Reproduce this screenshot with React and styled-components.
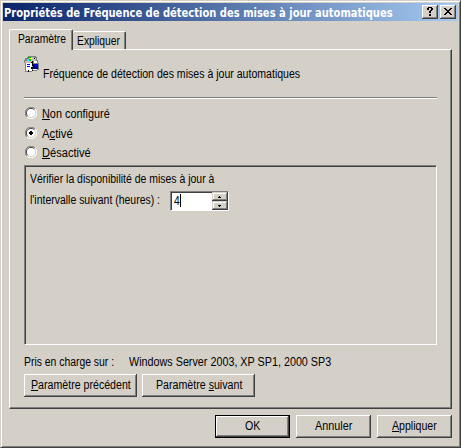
import React, { useLayoutEffect, useRef, useState } from 'react';
import styled, { createGlobalStyle } from 'styled-components';

const FACE = '#d4d0c8';
const SHADOW = '#808080';
const DARK = '#404040';

const GlobalStyle = createGlobalStyle`
  * { box-sizing: border-box; }
  body {
    margin: 0;
    background: ${FACE};
    font-family: "Liberation Sans", Arial, sans-serif;
    font-size: 12px;
    line-height: 14px;
    color: #000;
  }
`;

const Dialog = styled.div`
  width: 461px;
  height: 448px;
  display: flex;
  flex-direction: column;
  padding: 1px;
  background: ${FACE};
  border: 1px solid;
  border-color: ${FACE} ${DARK} ${DARK} ${FACE};
  box-shadow: inset 1px 1px #fff, inset -1px -1px ${SHADOW};
`;

const TitleBar = styled.header`
  height: 18px;
  margin: 1px 1px 0;
  padding: 0 2px 0 1px;
  display: flex;
  align-items: center;
  background: linear-gradient(to right, #0a246a, #a6caf0);
  color: #fff;
  font: bold 11.5px/14px "DejaVu Sans", sans-serif;
`;

const Title = styled.div`
  flex: 1;
  padding-top: 1px;
`;

const TitleButton = styled.button`
  width: 16px;
  height: 14px;
  margin-left: 2px;
  padding: 0;
  border: 0;
  display: block;
  background: ${FACE};
  box-shadow: inset -1px -1px ${DARK}, inset 1px 1px #fff, inset -2px -2px ${SHADOW};
`;

const Glyph = styled.svg`
  display: block;
  shape-rendering: crispEdges;
`;

const Tabs = styled.nav`
  display: flex;
  align-items: flex-end;
  height: 28px;
  margin: 0 7px;
`;

const Tab = styled.div`
  position: relative;
  z-index: ${props => (props.$active ? 1 : 0)};
  width: ${props => props.$width}px;
  height: ${props => (props.$active ? 21 : 18)}px;
  margin-bottom: ${props => (props.$active ? -1 : 0)}px;
  padding: ${props => (props.$active ? '2px 0 0 8px' : '2px 0 0 4px')};
  background: ${FACE};
  border-top: 1px solid #fff;
  border-left: ${props => (props.$active ? '1px solid #fff' : '0')};
  border-right: 1px solid ${DARK};
  border-radius: 2px 2px 0 0;
  box-shadow: inset -1px 0 ${SHADOW};
`;

const Panel = styled.main`
  width: 443px;
  height: 360px;
  margin-left: 7px;
  padding: 6px 13px 0 14px;
  border: 1px solid;
  border-color: #fff ${DARK} ${DARK} #fff;
  box-shadow: inset -1px -1px ${SHADOW};
`;

const PolicyRow = styled.div`
  display: flex;
  height: 41px;
  gap: 3px;
`;

const PolicyName = styled.div`
  padding-top: 11px;
`;

const Separator = styled.div`
  width: 413px;
  height: 2px;
  background: #fff;
  border-top: 1px solid ${SHADOW};
`;

const Options = styled.div`
  height: 66px;
  padding-top: 7px;
`;

const Option = styled.label`
  display: flex;
  align-items: flex-start;
  height: ${props => props.$height || 20}px;
  gap: 5px;
  padding: 1px 0 0 1px;
`;

const Settings = styled.section`
  width: 413px;
  height: 180px;
  padding: 6px 5px 0;
  border: 1px solid;
  border-color: ${SHADOW} #fff #fff ${SHADOW};
  box-shadow: inset 1px 1px ${DARK};
`;

const IntervalRow = styled.div`
  display: flex;
  height: 20px;
  margin-top: 5px;
  gap: 10px;
`;

const IntervalLabel = styled.div`
  padding-top: 2px;
`;

const Field = styled.div`
  display: flex;
  width: 59px;
  height: 20px;
  padding: 1px 0 0 1px;
  background: #fff;
  border: 1px solid;
  border-color: ${SHADOW} #fff #fff ${SHADOW};
  box-shadow: inset 1px 1px ${DARK};
`;

const Value = styled.div`
  width: 40px;
  height: 16px;
  padding: 1px 0 0 2px;
  display: flex;
`;

const Caret = styled.i`
  width: 1px;
  height: 13px;
  background: #000;
`;

const Spinner = styled.div`
  display: flex;
  flex-direction: column;
  width: 16px;
  margin-top: -1px;
`;

const SpinButton = styled.button`
  width: 16px;
  height: 9px;
  padding: 0;
  border: 0;
  display: block;
  background: ${FACE};
  box-shadow: inset -1px -1px ${DARK}, inset 1px 1px ${FACE}, inset -2px -2px ${SHADOW}, inset 2px 2px #fff;
`;

const Support = styled.div`
  display: flex;
  gap: 15px;
  height: 29px;
  padding-top: 10px;
`;

const ButtonRow = styled.div`
  display: flex;
  gap: 5px;
`;

const Footer = styled.footer`
  display: flex;
  justify-content: flex-end;
  gap: 6px;
  padding: 6px 7px 0 0;
`;

const Button = styled.button`
  width: ${props => props.$width || 75}px;
  height: 23px;
  padding: 0 0 1px;
  display: flex;
  align-items: center;
  justify-content: center;
  font: inherit;
  color: inherit;
  background: ${FACE};
  border: ${props => (props.$default ? '1px solid #000' : '0')};
  box-shadow: inset -1px -1px ${DARK}, inset 1px 1px #fff, inset -2px -2px ${SHADOW};
`;

const FitBox = styled.span`
  display: block;
  width: ${props => props.$width}px;
  height: 14px;
  white-space: nowrap;
`;

const FitInner = styled.span`
  display: inline-block;
  transform-origin: 0 0;
`;

const Key = styled.span`
  text-decoration: underline;
  text-decoration-thickness: 1px;
  text-underline-offset: 1px;
`;

// squeezes a line of text to the width the dialog font would give it
function Fit({ width, children }) {
  const ref = useRef(null);
  const [scale, setScale] = useState(1);

  useLayoutEffect(() => {
    setScale(width / ref.current.offsetWidth);
  }, [width]);

  return (
    <FitBox $width={width}>
      <FitInner ref={ref} style={{ transform: `scaleX(${scale})` }}>{children}</FitInner>
    </FitBox>
  );
}

function Radio({ checked }) {
  return (
    <svg width="12" height="12" viewBox="0 0 12 12">
      <circle cx="6" cy="6" r="5" fill="#fff" />
      <path d="M1.9 10.1A5.6 5.6 0 0 1 10.1 1.9" fill="none" stroke={SHADOW} />
      <path d="M2.7 9.3A4.6 4.6 0 0 1 9.3 2.7" fill="none" stroke={DARK} />
      <path d="M10.1 1.9A5.6 5.6 0 0 1 1.9 10.1" fill="none" stroke="#fff" />
      <path d="M9.3 2.7A4.6 4.6 0 0 1 2.7 9.3" fill="none" stroke={FACE} />
      {checked && <path d="M5 4h2v1h1v2h-1v1h-2v-1h-1v-2h1z" fill="#000" shapeRendering="crispEdges" />}
    </svg>
  );
}

function PolicyIcon() {
  return (
    <Glyph width="16" height="16" viewBox="0 0 16 16">
      <path d="M4 0h8v1h1v3h1v3h1v7h-2v1H8v1H1V7H0V4h1V2h2V1h1z" fill="#808080" />
      <path d="M5 1h5v1h2v3H9v2H1V5h2V3h2z" fill="#c0c0c0" />
      <path d="M4 1h3v1H4zM5 3h2v2H5zM3 2h1v1H3z" fill="#00c000" />
      <path d="M3 3h2v2H3z" fill="#00ffff" />
      <path d="M6 2h2v1H6zM7 4h1v1H7z" fill="#ffff00" />
      <path d="M2 7h6v8H2zM9 13h4v1H9zM10 5h3v2h-3z" fill="#fff" />
      <path d="M3 8h3v1H3zM3 10h3v1H3z" fill="#0000ff" />
      <path d="M9 8h5v5H9z" fill="#0000a8" />
      <path d="M11 8h2v2h-2z" fill="#0000ff" />
      <path d="M8 5h1v1H8zM7 6h2v1H7zM8 7h1v3H8zM7 11h2v2H7zM10 2h1v1h-1zM4 14h1v2H4zM8 14h1v1H8z" fill="#000" />
    </Glyph>
  );
}

export default function App() {
  return (
    <>
      <GlobalStyle />
      <Dialog>
        <TitleBar>
          <Title><Fit width={389}>Propriétés de Fréquence de détection des mises à jour automatiques</Fit></Title>
          <TitleButton aria-label="Aide">
            <Glyph width="16" height="14">
              <path d="M6 2h4v1h1v2h-1v1H9v2H7V6h1V5h1V3H7v2H5V3h1zM7 9h2v2H7z" />
            </Glyph>
          </TitleButton>
          <TitleButton aria-label="Fermer">
            <Glyph width="16" height="14">
              <path d="M4 3h2v1h1v1h2V4h1V3h2v1h-1v1h-1v1H9v1h1v1h1v1h1v1h-2V9H9V8H7v1H6v1H4V9h1V8h1V7h1V6H6V5H5V4H4z" />
            </Glyph>
          </TitleButton>
        </TitleBar>

        <Tabs>
          <Tab $active $width={64}><Fit width={48}>Paramètre</Fit></Tab>
          <Tab $width={53}><Fit width={43}>Expliquer</Fit></Tab>
        </Tabs>

        <Panel>
          <PolicyRow>
            <PolicyIcon />
            <PolicyName><Fit width={257}>Fréquence de détection des mises à jour automatiques</Fit></PolicyName>
          </PolicyRow>
          <Separator />

          <Options>
            <Option><Radio /><Fit width={68}><Key>N</Key>on configuré</Fit></Option>
            <Option $height={19}><Radio checked /><Fit width={31}>A<Key>c</Key>tivé</Fit></Option>
            <Option><Radio /><Fit width={49}><Key>D</Key>ésactivé</Fit></Option>
          </Options>

          <Settings>
            <Fit width={184}>Vérifier la disponibilité de mises à jour à</Fit>
            <IntervalRow>
              <IntervalLabel><Fit width={130}>l'intervalle suivant (heures) :</Fit></IntervalLabel>
              <Field>
                <Value><Fit width={6}>4</Fit><Caret /></Value>
                <Spinner>
                  <SpinButton aria-label="Plus">
                    <Glyph width="16" height="9"><path d="M7 4h1v1H7zM6 5h3v1H6z" /></Glyph>
                  </SpinButton>
                  <SpinButton aria-label="Moins">
                    <Glyph width="16" height="9"><path d="M6 4h3v1H6zM7 5h1v1H7z" /></Glyph>
                  </SpinButton>
                </Spinner>
              </Field>
            </IntervalRow>
          </Settings>

          <Support>
            <Fit width={90}>Pris en charge sur :</Fit>
            <Fit width={202}>Windows Server 2003, XP SP1, 2000 SP3</Fit>
          </Support>
          <ButtonRow>
            <Button $width={113}><Fit width={100}><Key>P</Key>aramètre précédent</Fit></Button>
            <Button $width={113}><Fit width={86}>Paramètre <Key>s</Key>uivant</Fit></Button>
          </ButtonRow>
        </Panel>

        <Footer>
          <Button $default><Fit width={15}>OK</Fit></Button>
          <Button><Fit width={37}>Annuler</Fit></Button>
          <Button><Fit width={45}><Key>A</Key>ppliquer</Fit></Button>
        </Footer>
      </Dialog>
    </>
  );
}
